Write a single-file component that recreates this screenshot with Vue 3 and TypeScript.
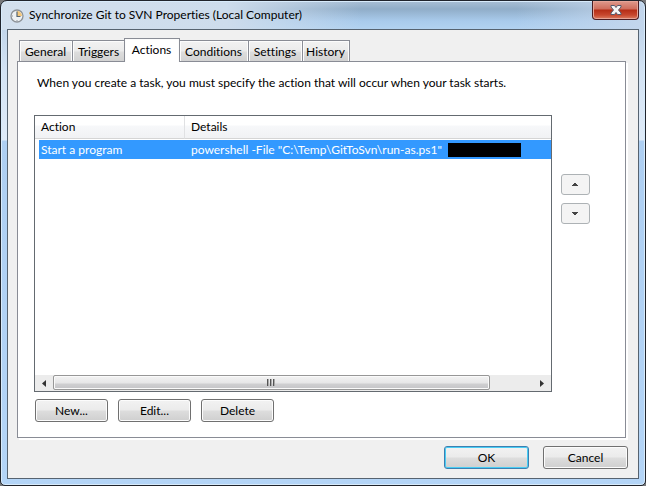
<script setup lang="ts">
import { ref } from 'vue'

const tabs = ['General', 'Triggers', 'Actions', 'Conditions', 'Settings', 'History']
const activeTab = ref('Actions')
const listActions = ['New...', 'Edit...', 'Delete']
const actions = [{ action: 'Start a program', details: 'powershell -File "C:\\Temp\\GitToSvn\\run-as.ps1"' }]
</script>

<template>
  <div class="desktop">
    <main class="window">
      <header class="titlebar">
        <svg class="clock" viewBox="0 0 14 14" aria-hidden="true">
          <circle cx="7" cy="7" r="6" fill="#eef1f3" stroke="#8d9297" stroke-width="1.3" />
          <path d="M7 7V2A5 5 0 0 1 12 7Z" fill="#f3c77c" />
          <path d="M7 2.5V7.5H10.5" fill="none" stroke="#566574" stroke-width="1.2" />
          <path d="M2 7h1M7 11v1" stroke="#8d979f" />
        </svg>
        <h1 class="title">Synchronize Git to SVN Properties (Local Computer)</h1>
        <button class="close" type="button" aria-label="Close">
          <svg viewBox="0 0 12 10" aria-hidden="true">
            <path d="M1 .5H4.5L6 2.5L7.5 .5H11V2L8.5 5L11 8V9.5H7.5L6 7.5L4.5 9.5H1V8L3.5 5L1 2Z" fill="#f5f5f5" stroke="#555a6c" />
          </svg>
        </button>
      </header>

      <section class="client">
        <div class="tabs" role="tablist">
          <button
            v-for="tab in tabs"
            :key="tab"
            type="button"
            role="tab"
            class="tab"
            :class="{ active: tab === activeTab }"
            :aria-selected="tab === activeTab"
            @click="activeTab = tab"
          >{{ tab }}</button>
        </div>

        <div class="page" role="tabpanel">
          <p class="hint">When you create a task, you must specify the action that will occur when your task starts.</p>
          <div class="body">
            <div class="list">
              <table class="table">
                <thead>
                  <tr><th class="first">Action</th><th>Details</th></tr>
                </thead>
                <tbody>
                  <tr v-for="row in actions" :key="row.details">
                    <td>{{ row.action }}</td>
                    <td><div class="details">{{ row.details }}<span class="redacted"></span></div></td>
                  </tr>
                </tbody>
              </table>
              <div class="scrollbar">
                <button class="arrow" type="button" aria-label="Scroll left">
                  <svg viewBox="0 0 4 7" aria-hidden="true"><path d="M4 0V7L0 3.5Z" fill="#333" /></svg>
                </button>
                <div class="track">
                  <div class="thumb"><i></i><i></i><i></i></div>
                </div>
                <button class="arrow" type="button" aria-label="Scroll right">
                  <svg viewBox="0 0 4 7" aria-hidden="true"><path d="M0 0V7L4 3.5Z" fill="#333" /></svg>
                </button>
              </div>
            </div>
            <div class="order">
              <button class="move" type="button" aria-label="Move up">
                <svg viewBox="0 0 7 3" aria-hidden="true"><path d="M0 3V2H1V1H2V0H4V1H5V2H6V3Z" fill="#444" /></svg>
              </button>
              <button class="move" type="button" aria-label="Move down">
                <svg viewBox="0 0 7 3" aria-hidden="true"><path d="M0 0V1H1V2H2V3H4V2H5V1H6V0Z" fill="#444" /></svg>
              </button>
            </div>
          </div>
          <div class="row-buttons">
            <button v-for="label in listActions" :key="label" type="button" class="button">{{ label }}</button>
          </div>
        </div>

        <footer class="footer">
          <button type="button" class="button wide default">OK</button>
          <button type="button" class="button wide">Cancel</button>
        </footer>
      </section>
    </main>
  </div>
</template>

<style>
body {
  margin: 0;
}
</style>

<style scoped>
* {
  box-sizing: border-box;
}

.desktop {
  display: flex;
  min-height: 100vh;
  background: #77787a;
  font: 12px/16px Lato, "Open Sans", sans-serif;
  font-variant-ligatures: none;
  color: #000;
}

button {
  font: inherit;
  font-variant-ligatures: none;
  color: inherit;
  padding: 0;
  margin: 0;
}

svg {
  display: block;
}

.window {
  flex: 1;
  display: flex;
  flex-direction: column;
  padding: 0 6px 6px;
  border: 1px solid #20242c;
  border-radius: 7px 7px 5px 5px;
  box-shadow: inset 0 0 0 1px #d8ebfb;
  background:
    linear-gradient(90deg, #d3e0ee 0, #cddcec 35%, transparent 56%, transparent 80%, #c3d6ec 100%) top / 100% 29px no-repeat,
    linear-gradient(180deg, #a9bfd5 0, #90adc8 8px, #a9cbec 20px, #b3d3f1 29px) top / 100% 29px no-repeat,
    linear-gradient(180deg, #b7cde5 0, #d3e3f4 70px, #dfebf8 139px, #aecff2 140px, #b4d5f7 100%);
}

.titlebar {
  display: flex;
  align-items: flex-start;
  height: 28px;
  flex: none;
  padding-left: 3px;
}

.clock {
  width: 14px;
  height: 14px;
  margin-top: 8px;
}

.title {
  flex: 1;
  margin: 6px 0 0 5px;
  font-size: 12px;
  line-height: 16px;
  font-weight: 400;
}

.close {
  display: flex;
  align-items: center;
  justify-content: center;
  width: 47px;
  height: 19px;
  border: 1px solid #4b1d22;
  border-top: 0;
  border-radius: 0 0 4px 4px;
  box-shadow: inset 0 0 0 1px #e6a497;
  background: linear-gradient(180deg, #df9a8d 0, #cf6d5c 8px, #b52d16 9px, #c7472e 14px, #dc7d61 100%);
}

.close svg {
  width: 12px;
  height: 10px;
}

.client {
  flex: 1;
  display: flex;
  flex-direction: column;
  padding: 8px 10px 9px 9px;
  border: 1px solid #566370;
  background: #f0f0f0;
}

.tabs {
  display: grid;
  grid-template-columns: 53px 53px 54px 69px 54px 48px;
  align-items: end;
  height: 23px;
  padding-left: 2px;
}

.tab {
  height: 21px;
  padding: 1px 1px 0 0;
  border: 1px solid #898c95;
  border-right-width: 0;
  border-bottom: 0;
  box-shadow: inset 1px 1px 0 #fcfcfc, inset -1px 0 0 #fcfcfc;
  background: linear-gradient(180deg, #f2f2f2 0, #ebebeb 10px, #dddddd 11px, #d2d2d2 100%);
  white-space: nowrap;
}

.tab:last-child {
  border-right-width: 1px;
}

.tab.active {
  z-index: 1;
  height: 24px;
  margin: 0 -1px -1px;
  padding-bottom: 3px;
  border-right-width: 1px;
  background: #fff;
}

.page {
  flex: 1;
  display: flex;
  flex-direction: column;
  margin-right: 2px;
  padding: 13px 35px 15px 16px;
  border: 1px solid #898c95;
  box-shadow: 2px 2px 0 #fff;
  background: #fff;
}

.hint {
  margin: 0 0 24px 3px;
  white-space: nowrap;
}

.body {
  flex: 1;
  display: flex;
  gap: 9px;
}

.list {
  flex: 1;
  display: flex;
  flex-direction: column;
  justify-content: space-between;
  min-width: 0;
  border: 1px solid #646a70;
}

.table {
  width: 100%;
  border-collapse: separate;
  border-spacing: 0;
  table-layout: fixed;
}

.table th,
.table td {
  text-align: left;
  font-weight: 400;
  white-space: nowrap;
}

.table th {
  height: 23px;
  padding: 0 6px;
  border-bottom: 1px solid #d5d5d5;
  background: linear-gradient(180deg, #fff 0, #fff 9px, #f7f8fa 10px, #f1f2f4 100%);
}

.table th.first {
  width: 150px;
  border-right: 1px solid #e0e1e3;
}

.table td {
  height: 20px;
  padding: 1px 6px 0;
  background: #3399ff;
  background-clip: padding-box;
  border-top: 1px solid #fff;
  color: #fff;
}

.table td:first-child {
  padding-left: 2px;
  border-left: 4px solid #fff;
}

.details {
  display: flex;
  align-items: center;
  gap: 6px;
}

.redacted {
  width: 73px;
  height: 14px;
  background: #000;
}

.scrollbar {
  display: flex;
  height: 16px;
  background: #ececec;
}

.arrow {
  display: flex;
  align-items: center;
  justify-content: center;
  width: 18px;
  border: 0;
  background: transparent;
}

.arrow svg {
  width: 4px;
  height: 7px;
}

.track {
  flex: 1;
  display: flex;
}

.thumb {
  display: flex;
  align-items: center;
  justify-content: center;
  gap: 1px;
  width: 91%;
  height: 15px;
  border: 1px solid #979797;
  border-radius: 2px;
  box-shadow: inset 0 0 0 1px #fafafa;
  background: linear-gradient(180deg, #f3f3f3 0, #e6e6e7 7px, #cfcfd1 8px, #c4c4c7 100%);
}

.thumb i {
  width: 2px;
  height: 7px;
  border-left: 1px solid #555;
  border-right: 1px solid #aaa;
}

.order {
  display: flex;
  flex-direction: column;
  gap: 8px;
  padding-top: 59px;
}

.move {
  display: flex;
  align-items: center;
  justify-content: center;
  width: 29px;
  height: 21px;
  border: 1px solid #adb2b5;
  border-radius: 3px;
  background: #f4f4f4;
}

.move svg {
  width: 7px;
  height: 3px;
}

.row-buttons {
  display: flex;
  gap: 10px;
  margin-top: 7px;
  padding-left: 1px;
}

.button {
  width: 73px;
  height: 23px;
  border: 1px solid #707070;
  border-radius: 3px;
  box-shadow: inset 0 0 0 1px #fcfcfc;
  background: linear-gradient(180deg, #f2f2f2 0, #ebebeb 10px, #dddddd 11px, #cfcfcf 100%);
}

.button.wide {
  width: 85px;
}

.button.default {
  border-color: #3c7fb1;
  box-shadow: inset 0 0 0 1px #48cdf4;
}

.footer {
  display: flex;
  justify-content: flex-end;
  gap: 14px;
  margin-top: 8px;
}
</style>
